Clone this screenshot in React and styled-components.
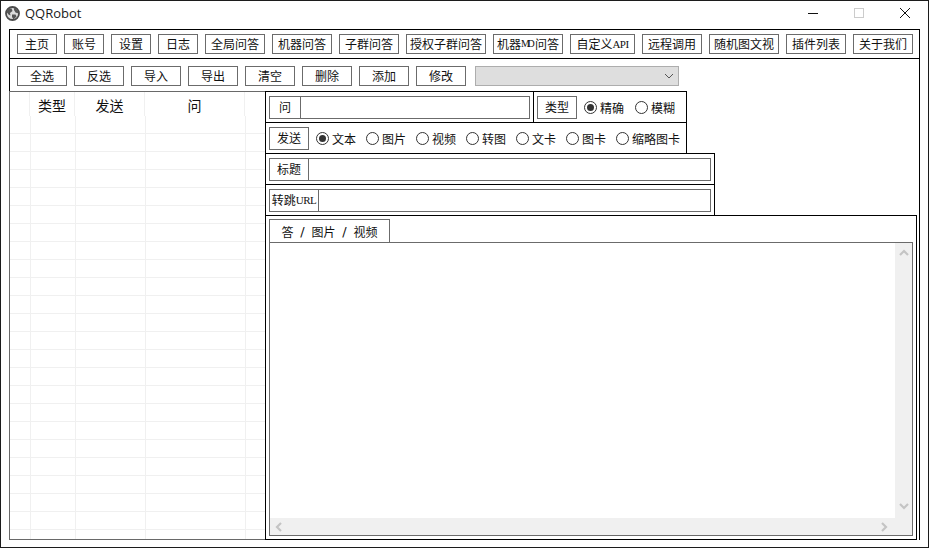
import React from "react";
import styled, { createGlobalStyle } from "styled-components";

const Global = createGlobalStyle`
  html, body { margin: 0; padding: 0; background: #fff; }
  * { box-sizing: border-box; }
`;

const CJK = `"Noto Sans CJK SC", "Liberation Sans", sans-serif`;

const Win = styled.div`
  width: 929px; height: 548px; border: 1px solid #1c1c1c; background: #fff;
  display: flex; flex-direction: column; overflow: hidden;
  font-family: ${CJK}; font-size: 12px; color: #111;
`;
const TitleBar = styled.div`
  height: 28px; flex: none; display: flex; align-items: center; padding: 0 0 4px 4px;
`;
const TitleText = styled.span`
  font-family: "Open Sans", "Noto Sans", sans-serif; font-size: 13px; color: #1a1a1a; margin-left: 5px; flex: 1;
`;
const WinCtl = styled.div`
  width: 46px; height: 24px; display: flex; align-items: center; justify-content: center;
`;
const Main = styled.div`
  margin-left: 8px; width: 911px; height: 511px; flex: none; display: flex; flex-direction: column;
  border-top: 1px solid #000; border-right: 1px solid #000;
`;
const Bar = styled.div`
  flex: none; height: ${p => p.$h}px; display: flex; align-items: center; gap: 7px; padding-left: 7px;
  padding-top: ${p => p.$pt || 0}px;
  border-left: 1px solid #000;
  border-bottom: ${p => p.$line ? "1px solid #000" : "none"};
`;
const Btn = styled.div`
  width: ${p => p.$w}px; height: ${p => p.$ht || 20}px; flex: none;
  border: 1px solid #6b6b6b; background: #fff; display: flex; align-items: center; justify-content: center;
  white-space: nowrap; line-height: 1; font-size: 12px;
`;
const Latin = styled.span`
  font-family: "Liberation Serif", serif; font-size: ${p => p.$s || 11}px; letter-spacing: ${p => p.$ls ?? -0.5}px;
`;
const Select = styled.div`
  margin-left: 2px; width: 204px; height: 20px; background: #dedede; border: 1px solid #adadad;
  display: flex; align-items: center; justify-content: flex-end; padding-right: 3px;
`;
const Content = styled.div`
  flex: 1; display: flex; min-height: 0;
`;
const Table = styled.div`
  width: 256px; flex: none; border: 1px solid #696969; border-right: none; overflow: hidden;
  display: flex; flex-direction: column;
`;
const THead = styled.div`
  display: grid; grid-template-columns: 20px 45px 70px 100px 20px; flex: none; height: 24px;
`;
const TRow = styled.div`
  display: grid; grid-template-columns: 21px 45px 70px 100px 20px; flex: none;
  height: 18px; border-bottom: 1px solid #f0f0f0;
`;
const TCell = styled.div`
  border-right: 1px solid #f0f0f0; display: flex; justify-content: center; padding-top: 4px;
  font-size: 14px; line-height: 18px; color: #111;
  &:last-child { border-right: none; }
`;
const Right = styled.div`
  flex: 1; min-width: 0; display: flex; flex-direction: column;
`;
const Row = styled.div`
  width: ${p => p.$w}px; height: 31px; flex: none; display: flex; align-items: center;
  padding-left: 3px; border: 1px solid #000; border-bottom: none;
`;
const Field = styled.div`
  width: ${p => p.$w}px; height: 23px; flex: none; border: 1px solid #6b6b6b; display: flex; background: #fff;
`;
const FieldLabel = styled.div`
  width: ${p => p.$w}px; flex: none; border-right: 1px solid #6b6b6b; display: flex; align-items: center;
  justify-content: center; white-space: nowrap; font-size: 12px; line-height: 1;
`;
const TypeCell = styled.div`
  display: flex; align-items: center; height: 100%; margin-left: 3px; padding-left: 3px; flex: 1;
  border-left: 1px solid #000;
`;
const Radios = styled.div`
  display: flex; align-items: center; margin-left: ${p => p.$ml}px;
`;
const RadioItem = styled.div`
  display: flex; align-items: center; width: ${p => p.$w || 50}px; flex: none; white-space: nowrap;
`;
const RadioMark = styled.span`
  width: 13px; height: 13px; border-radius: 50%; border: 1px solid #333; margin-right: 3px; flex: none;
  display: flex; align-items: center; justify-content: center; background: #fff;
  &::after { content: ""; width: 7px; height: 7px; border-radius: 50%; background: ${p => p.$on ? "#333" : "transparent"}; }
`;
const Tabs = styled.div`
  flex: 1; min-height: 0; width: 652px; border: 1px solid #000; padding: 3px; display: flex; flex-direction: column;
`;
const Tab = styled.div`
  width: 121px; height: 23px; flex: none; border: 1px solid #6b6b6b; border-bottom: none;
  display: flex; align-items: center; justify-content: center; gap: 5.5px; white-space: nowrap; font-size: 12px;
`;
const Slash = styled.span`
  width: 7px; font-family: "DejaVu Sans", sans-serif; font-size: 13px; text-align: center; line-height: 1;
`;
const Editor = styled.div`
  flex: 1; min-height: 0; border: 1px solid #6b6b6b; display: grid;
  grid-template-columns: 1fr 17px; grid-template-rows: 1fr 17px; background: #fff;
`;
const Track = styled.div`
  background: #f0f0f0; display: flex; justify-content: space-between; align-items: center;
  flex-direction: ${p => p.$v ? "column" : "row"};
  padding: ${p => p.$v ? "6px 0" : "0 5px"};
`;

const Chevron = ({ dir }) => {
  const d = { up: "M1 6 L5 2 L9 6", down: "M1 2 L5 6 L9 2", left: "M6 1 L2 5 L6 9", right: "M2 1 L6 5 L2 9" }[dir];
  return (
    <svg width="10" height="10" viewBox="0 0 10 10" style={{ display: "block" }}>
      <path d={d} fill="none" stroke="#c4c4c4" strokeWidth="2.2" />
    </svg>
  );
};

const Logo = () => (
  <svg width="15" height="15" viewBox="0 0 15 15" style={{ display: "block" }}>
    <circle cx="7.5" cy="7.5" r="6.5" fill="#dcdcdc" stroke="#4a4a4a" strokeWidth="1.8" />
    <path d="M3 3 L6.5 2.5 L7.5 5 L5 7 L5.5 9.5 L3.5 8.5 L1.5 6 Z" fill="#555" />
    <path d="M9 1.8 L12.5 4 L13.5 7.5 L10.5 6.5 L9 4 Z" fill="#555" />
    <path d="M7 8.5 L10.5 8.5 L11.5 10.5 L8.5 13.5 L7 11 Z" fill="#555" />
  </svg>
);

const top1 = [
  ["主页", 40], ["账号", 40], ["设置", 40], ["日志", 40], ["全局问答", 60], ["机器问答", 60], ["子群问答", 60],
  ["授权子群问答", 80],
  [<>机器<Latin $s={10} $ls={-2.5}>MD</Latin>&nbsp;问答</>, 70, "md"],
  [<>自定义<Latin>API</Latin></>, 65, "api"],
  ["远程调用", 60], ["随机图文视", 70], ["插件列表", 60], ["关于我们", 60],
];
const top2 = ["全选", "反选", "导入", "导出", "清空", "删除", "添加", "修改"];
const sends = [["文本", true], ["图片"], ["视频"], ["转图"], ["文卡"], ["图卡"], ["缩略图卡"]];

const Radio = ({ label, on, w }) => (
  <RadioItem $w={w}><RadioMark $on={on} />{label}</RadioItem>
);

export default function App() {
  return (
    <>
      <Global />
      <Win>
        <TitleBar>
          <Logo />
          <TitleText>QQRobot</TitleText>
          <WinCtl>
            <svg width="10" height="10" viewBox="0 0 10 10"><path d="M0 5.5H10" stroke="#111" /></svg>
          </WinCtl>
          <WinCtl>
            <svg width="10" height="10" viewBox="0 0 10 10"><rect x=".5" y=".5" width="9" height="9" fill="none" stroke="#ccc" /></svg>
          </WinCtl>
          <WinCtl>
            <svg width="10" height="10" viewBox="0 0 10 10"><path d="M0 0L10 10M10 0L0 10" stroke="#111" /></svg>
          </WinCtl>
        </TitleBar>
        <Main>
          <Bar $h={29} $line>
            {top1.map(([t, w, k]) => <Btn key={k || t} $w={w}>{t}</Btn>)}
          </Bar>
          <Bar $h={32} $pt={2}>
            {top2.map(t => <Btn key={t} $w={50}>{t}</Btn>)}
            <Select>
              <svg width="12" height="12" viewBox="0 0 12 12"><path d="M2 4 L6 8 L10 4" fill="none" stroke="#555" /></svg>
            </Select>
          </Bar>
          <Content>
            <Table>
              <THead>
                <TCell /><TCell>类型</TCell><TCell>发送</TCell><TCell>问</TCell><TCell />
              </THead>
              {Array.from({ length: 24 }).map((_, i) => (
                <TRow key={i}>
                  <TCell /><TCell /><TCell /><TCell /><TCell />
                </TRow>
              ))}
            </Table>
            <Right>
              <Row $w={422}>
                <Field $w={261}><FieldLabel $w={31}>问</FieldLabel></Field>
                <TypeCell>
                  <Btn $w={40} $ht={23}>类型</Btn>
                  <Radios $ml={7}>
                    <Radio label="精确" on w={51} />
                    <Radio label="模糊" w={44} />
                  </Radios>
                </TypeCell>
              </Row>
              <Row $w={422}>
                <Btn $w={40} $ht={23}>发送</Btn>
                <Radios $ml={7}>
                  {sends.map(([t, on]) => <Radio key={t} label={t} on={on} />)}
                </Radios>
              </Row>
              <Row $w={450}>
                <Field $w={442}><FieldLabel $w={39}>标题</FieldLabel></Field>
              </Row>
              <Row $w={450}>
                <Field $w={442}><FieldLabel $w={49}>转跳<Latin>URL</Latin></FieldLabel></Field>
              </Row>
              <Tabs>
                <Tab>答<Slash>/</Slash>图片<Slash>/</Slash>视频</Tab>
                <Editor>
                  <div />
                  <Track $v><Chevron dir="up" /><Chevron dir="down" /></Track>
                  <Track><Chevron dir="left" /><Chevron dir="right" /></Track>
                  <Track />
                </Editor>
              </Tabs>
            </Right>
          </Content>
        </Main>
      </Win>
    </>
  );
}
